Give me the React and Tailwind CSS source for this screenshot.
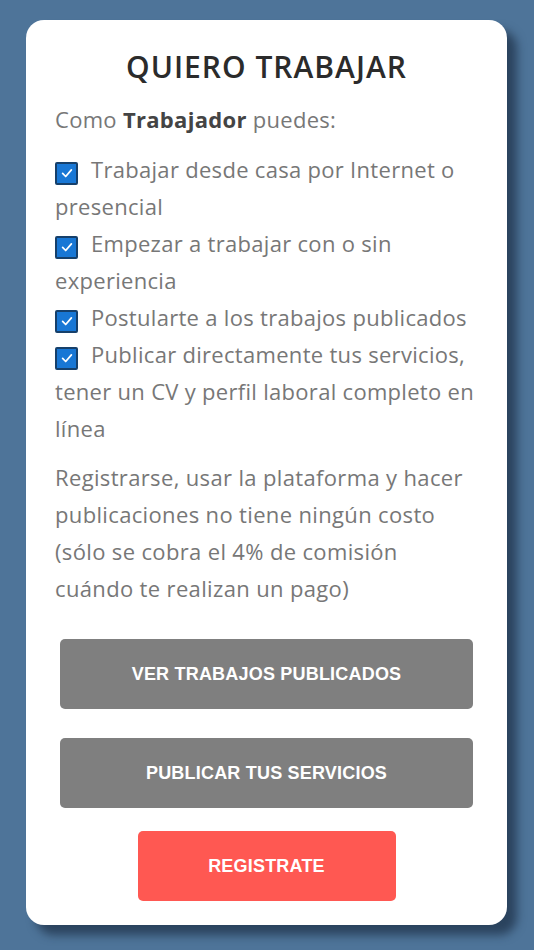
import React from "react";

function Check() {
  return (
    <span className="inline-flex items-center justify-center w-[23px] h-[23px] bg-[#1877d5] border-2 border-[#16406b] rounded-[2px] align-[-2px] mr-[13px]">
      <svg viewBox="0 0 16 16" className="w-[14px] h-[14px]" fill="none">
        <path d="M3 8.5 L6.5 12 L13 4.5" stroke="white" strokeWidth="2" strokeLinecap="round" strokeLinejoin="round" />
      </svg>
    </span>
  );
}

export default function App() {
  const items = [
    "Trabajar desde casa por Internet o presencial",
    "Empezar a trabajar con o sin experiencia",
    "Postularte a los trabajos publicados",
    "Publicar directamente tus servicios, tener un CV y perfil laboral completo en línea",
  ];
  return (
    <div className="min-h-[950px] w-full bg-[#4e7499] pt-[20px] pl-[26px]" style={{ fontFamily: '"Open Sans", sans-serif' }}>
      <div className="w-[481px] h-[905px] bg-white rounded-[18px] shadow-[10px_10px_10px_rgba(20,35,55,0.6)] pt-[29px] px-[29px]">
        <h1 className="text-center text-[30px] leading-[36px] font-semibold text-[#2b2b2b] tracking-[1px]">QUIERO TRABAJAR</h1>
        <p className="mt-[16px] text-[22px] leading-[37px] tracking-[0.3px] text-[#777]">
          Como <b className="font-bold text-[#444]">Trabajador</b> puedes:
        </p>
        <ul className="mt-[13px] text-[22px] leading-[37px] tracking-[0.3px] text-[#777]">
          {items.map((t) => (
            <li key={t}>
              <Check />
              {t}
            </li>
          ))}
        </ul>
        <p className="mt-[12px] text-[22px] leading-[37px] tracking-[0.35px] text-[#777]">
          Registrarse, usar la plataforma y hacer publicaciones no tiene ningún costo (sólo se cobra el 4% de comisión cuándo te realizan un pago)
        </p>
        <div className="mt-[32px] flex flex-col items-center" style={{ fontFamily: '"Liberation Sans", Arial, sans-serif' }}>
          <div className="w-[413px] h-[70px] bg-[#7f7f7f] rounded-[5px] flex items-center justify-center text-white font-bold text-[18px] tracking-[0.2px]">VER TRABAJOS PUBLICADOS</div>
          <div className="mt-[29px] w-[413px] h-[70px] bg-[#7f7f7f] rounded-[5px] flex items-center justify-center text-white font-bold text-[18px] tracking-[0.2px]">PUBLICAR TUS SERVICIOS</div>
          <div className="mt-[23px] w-[258px] h-[70px] bg-[#ff5852] rounded-[5px] flex items-center justify-center text-white font-bold text-[18px] tracking-[0.2px]">REGISTRATE</div>
        </div>
      </div>
    </div>
  );
}
